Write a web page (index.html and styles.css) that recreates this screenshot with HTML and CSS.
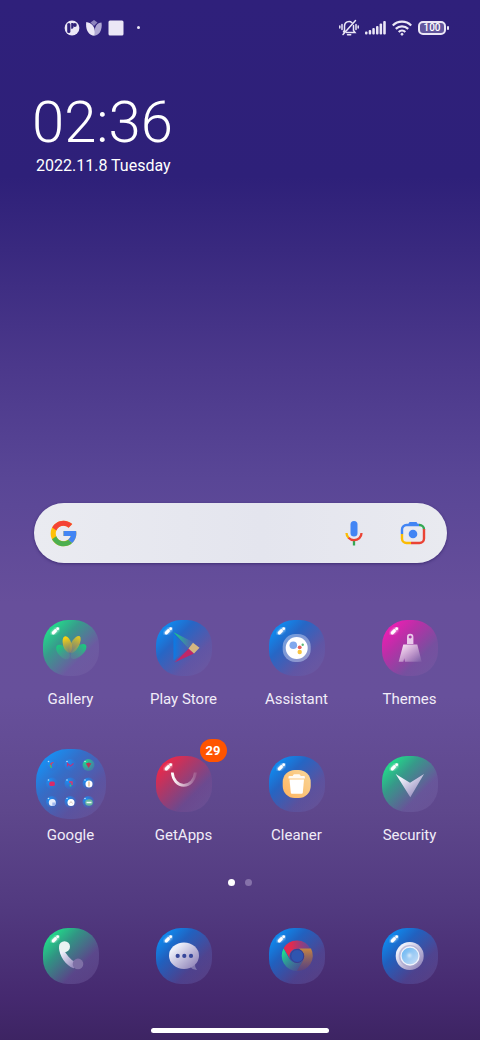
FILE: index.html
```
<!DOCTYPE html>
<html lang="en">
<head>
  <meta charset="UTF-8" />
  <meta name="viewport" content="width=device-width, initial-scale=1" />
  <title>Home screen</title>
  <link rel="stylesheet" href="styles.css">
</head>
<body>
  <!-- shared gradients and the bubble highlight -->
  <svg class="defs" aria-hidden="true">
    <defs>
      <linearGradient id="fade" x1="0" y1="0" x2="1" y2="1">
        <stop offset="0.1" stop-color="#fff" stop-opacity=".85" />
        <stop offset="1" stop-color="#fff" stop-opacity=".05" />
      </linearGradient>
      <linearGradient id="silver" x1="0" y1="0" x2="1" y2="1">
        <stop offset="0.2" stop-color="#eef0fa" />
        <stop offset="1" stop-color="#8375b0" />
      </linearGradient>
      <linearGradient id="yellow" x1="0" y1="0" x2="0" y2="1">
        <stop offset="0.1" stop-color="#fbd30f" />
        <stop offset="1" stop-color="#a98c50" stop-opacity=".4" />
      </linearGradient>
      <linearGradient id="green" x1="0" y1="0" x2="0" y2="1">
        <stop offset="0" stop-color="#14d07c" />
        <stop offset="1" stop-color="#5a8a94" stop-opacity=".4" />
      </linearGradient>
      <linearGradient id="peach" x1="0" y1="1" x2="1" y2="0">
        <stop offset="0" stop-color="#ffb45e" />
        <stop offset="1" stop-color="#f8d79a" />
      </linearGradient>
      <linearGradient id="lens" x1="0" y1="0" x2="1" y2="1">
        <stop offset="0" stop-color="#62b4f3" />
        <stop offset="1" stop-color="#cfdff5" />
      </linearGradient>
      <filter id="soft" x="-50%" y="-50%" width="200%" height="200%">
        <feGaussianBlur stdDeviation="0.8" />
      </filter>
      <symbol id="shine" viewBox="0 0 56 56">
        <path d="M10 13l4.500-4" stroke="#fff" stroke-width="4" stroke-linecap="round" opacity=".6" filter="url(#soft)" />
        <path d="M10.300 12.800l2-2" stroke="#fff" stroke-width="3.200" stroke-linecap="round" />
        <circle cx="14.700" cy="8.700" r="1.400" fill="#fff" />
      </symbol>
    </defs>
  </svg>

  <header class="status">
    <div class="status-side">
      <svg width="16" height="16" viewBox="0 0 16 16">
        <circle cx="8" cy="8" r="7.400" fill="#ebe7f6" />
        <path d="M3.200 4.500a1.600 1.600 0 0 1 3.200 0v7a1.600 1.600 0 0 1-3.200 0z" fill="#2f217a" />
        <path d="M7.200 3h2.200v4.200a1.800 1.800 0 0 1-2.200 1.500z" fill="#2f217a" />
        <circle cx="10.800" cy="5" r="2" fill="#2f217a" />
      </svg>
      <svg width="16" height="16" viewBox="0 0 16 16">
        <path d="M4.500 2.500L8 0l3.500 2.500L8 6z" fill="#8d83bd" />
        <path d="M15.500 2.500C11 3 8 6 8.500 15.800 14 15 16.500 9 15.500 2.500z" fill="#b0a8d4" />
        <path d="M.3 2C6 3 10 7 8.500 15.800 2 15.500-.7 9 .3 2z" fill="#ebe7f6" />
      </svg>
      <svg width="16" height="16" viewBox="0 0 16 16"><rect x=".5" y=".5" width="15" height="15" rx="1.500" fill="#ebe7f6" /></svg>
      <span class="more"></span>
    </div>
    <div class="status-side">
      <svg width="20" height="17" viewBox="0 0 20 17" fill="none" stroke="#ebe7f6" stroke-width="1.500" stroke-linecap="round">
        <path d="M5.500 11.500V7a4.500 4.500 0 0 1 7.500-3.300M14.500 6.500v5l1.500 2H7.500" />
        <path d="M8.500 15.800h3.200M4 15.500L16.500 1.500M5.500 11.500l-1 1.300" />
        <path d="M3 5.500v5M.8 7v2M17 5.500v5M19.200 7v2" />
      </svg>
      <svg width="21" height="15" viewBox="0 0 21 15" fill="#ebe7f6">
        <rect y="11.500" width="2.500" height="3" rx="1" />
        <rect x="3.700" y="10" width="2.500" height="4.500" rx="1" />
        <rect x="7.300" y="8" width="2.500" height="6.500" rx="1" />
        <rect x="11" y="6" width="2.500" height="8.500" rx="1" />
        <rect x="14.600" y="3.500" width="2.500" height="11" rx="1" />
        <rect x="18.200" y="1" width="2.600" height="13.500" rx="1" />
      </svg>
      <svg width="20" height="16" viewBox="0 0 20 16" fill="none" stroke="#ebe7f6" stroke-width="2.200">
        <path d="M.8 5.500a13 13 0 0 1 18.400 0M3.800 8.900a8.800 8.800 0 0 1 12.400 0M6.700 12a4.700 4.700 0 0 1 6.600 0" />
        <circle cx="10" cy="14.200" r="1" fill="#ebe7f6" stroke-width="1" />
      </svg>
      <span class="battery">100</span>
    </div>
  </header>

  <section class="clock">
    <time class="clock-time">02:36</time>
    <div class="clock-date">2022.11.8 Tuesday</div>
  </section>

  <main>
    <form class="search">
      <svg width="27" height="27" viewBox="3 3 42 42">
        <path fill="#FFC107" d="M43.600 20H42V20H24v8h11.300c-1.600 4.700-6.100 8-11.300 8-6.600 0-12-5.400-12-12s5.400-12 12-12c3.100 0 5.800 1.200 8 3l5.600-5.600C34 6.100 29.300 4 24 4 13 4 4 13 4 24s9 20 20 20 20-9 20-20c0-1.300-.1-2.700-.4-4z" />
        <path fill="#F44336" d="M6.300 14.700l6.600 4.800C14.700 15.100 19 12 24 12c3.100 0 5.800 1.200 8 3l5.600-5.600C34 6.100 29.300 4 24 4 16.300 4 9.700 8.300 6.300 14.700z" />
        <path fill="#4CAF50" d="M24 44c5.200 0 9.900-2 13.400-5.200l-6.200-5.200C29.200 35.100 26.700 36 24 36c-5.200 0-9.600-3.300-11.300-7.900l-6.500 5C9.500 39.600 16.200 44 24 44z" />
        <path fill="#4285F4" d="M43.600 20H24v8h11.300c-.8 2.200-2.200 4.200-4.100 5.600l6.200 5.200C37 39.200 44 34 44 24c0-1.300-.1-2.700-.4-4z" />
      </svg>
      <input type="search" aria-label="Search">
      <button type="button" aria-label="Voice search">
        <svg width="18" height="26" viewBox="0 0 18 26" fill="none" stroke-width="2.300">
          <rect x="5.500" y="1" width="7" height="15.500" rx="3.500" fill="#4285f4" />
          <path d="M9 21v4.500" stroke="#34a853" />
          <path d="M1.500 13c0 2 .8 3.600 2.200 5" stroke="#fbbc04" />
          <path d="M3.500 17.800c1.500 1.600 3.400 2.400 5.500 2.400 4.300 0 7.500-3 7.500-7.200" stroke="#ea4335" />
        </svg>
      </button>
      <button type="button" aria-label="Lens">
        <svg width="26" height="24" viewBox="0 0 26 24" fill="none" stroke-width="2.400">
          <path d="M2 13V8.500A4.500 4.500 0 0 1 6.500 4H19" stroke="#4285f4" />
          <path d="M8 3.500L9.500 1h7L18 3.500z" fill="#4285f4" />
          <path d="M19 4h.5A4.500 4.500 0 0 1 24 8.500" stroke="#34a853" />
          <path d="M24 8v9.500a4.500 4.500 0 0 1-4.500 4.500H11" stroke="#ea4335" />
          <path d="M2 13v4.500A4.500 4.500 0 0 0 6.500 22H11" stroke="#fbbc04" />
          <circle cx="13" cy="13" r="4.300" fill="#4285f4" />
        </svg>
      </button>
    </form>

    <nav class="apps">
      <a class="app" href="#">
        <span class="bubble is-green">
          <svg viewBox="0 0 56 56">
            <use href="#shine" />
            <ellipse cx="20" cy="32" rx="4.800" ry="8.800" transform="rotate(-42 20 32)" fill="url(#green)" />
            <ellipse cx="35.500" cy="31.500" rx="4.800" ry="9.800" transform="rotate(48 35.500 31.500)" fill="url(#green)" />
            <ellipse cx="24.300" cy="24.500" rx="4.300" ry="8.500" transform="rotate(-16 24.300 24.500)" fill="url(#yellow)" />
            <ellipse cx="32" cy="24.500" rx="4" ry="9.500" transform="rotate(28 32 24.500)" fill="url(#yellow)" opacity=".8" />
          </svg>
        </span>
        <span class="app-name">Gallery</span>
      </a>
      <a class="app" href="#">
        <span class="bubble is-blue">
          <svg viewBox="0 0 56 56">
            <defs>
              <linearGradient id="playBlue"><stop offset="0" stop-color="#087be6" /><stop offset="1" stop-color="#4e63b5" stop-opacity=".1" /></linearGradient>
              <linearGradient id="playGreen"><stop offset="0" stop-color="#12db80" /><stop offset="1" stop-color="#6c79a8" stop-opacity=".2" /></linearGradient>
            </defs>
            <use href="#shine" />
            <path d="M17.500 14v26.500L32 28z" fill="url(#playBlue)" />
            <path d="M17.500 12.300L38 22.500l-6 5.500z" fill="url(#playGreen)" />
            <path d="M18.500 42.500L33 28.500l5 5z" fill="#c02768" />
            <path d="M37 22.700l6.500 5-5.500 5.800-5.500-5z" fill="#d5b781" />
          </svg>
        </span>
        <span class="app-name">Play Store</span>
      </a>
      <a class="app" href="#">
        <span class="bubble is-blue">
          <svg viewBox="0 0 56 56">
            <use href="#shine" />
            <rect x="13.700" y="14" width="28" height="28" rx="12.500" fill="#bac8ed" opacity=".55" />
            <circle cx="27.700" cy="28" r="11" fill="#fff" />
            <circle cx="24.300" cy="25.300" r="3.800" fill="#80a8ee" />
            <circle cx="30.700" cy="27.300" r="1.900" fill="#e8615a" />
            <circle cx="30.700" cy="32" r="2.200" fill="#f9c440" />
            <circle cx="33.700" cy="24.700" r="1.200" fill="#5db979" />
          </svg>
        </span>
        <span class="app-name">Assistant</span>
      </a>
      <a class="app" href="#">
        <span class="bubble is-pink">
          <svg viewBox="0 0 56 56">
            <use href="#shine" />
            <path fill-rule="evenodd" d="M25 24v-7a3.200 3.200 0 0 1 6.400 0v7zM28.200 15.500a1.500 1.500 0 1 0 .01 0z" fill="#f0d9f2" opacity=".9" />
            <path d="M21.300 24.500h14l4.400 17.200H23l-.8-3.500-.8 3.500h-4.700z" fill="url(#fade)" />
          </svg>
        </span>
        <span class="app-name">Themes</span>
      </a>
      <a class="app" href="#">
        <span class="bubble is-folder">
          <svg viewBox="0 0 70 70">
            <defs>
              <radialGradient id="mini" cx=".3" cy=".3" r=".8"><stop offset="0" stop-color="#1594fa" /><stop offset="1" stop-color="#3b68c6" stop-opacity=".2" /></radialGradient>
              <radialGradient id="miniGreen" cx=".3" cy=".3" r=".8"><stop offset="0" stop-color="#1cdf8c" /><stop offset="1" stop-color="#458f9c" stop-opacity=".5" /></radialGradient>
            </defs>
            <g fill="url(#mini)">
              <circle cx="16" cy="16" r="6" /><circle cx="34.500" cy="16" r="6" /><circle cx="52.500" cy="16" r="6" fill="url(#miniGreen)" />
              <circle cx="16" cy="34.500" r="6" /><circle cx="34.500" cy="34.500" r="6" /><circle cx="52.500" cy="34.500" r="6" />
              <circle cx="16" cy="53" r="6" /><circle cx="34.500" cy="53" r="6" /><circle cx="52.500" cy="53" r="6" />
            </g>
            <path d="M17.500 13.500l-2.500 1v4" stroke="#e33b55" stroke-width="1.300" fill="none" />
            <path d="M14 16l1.500 3" stroke="#22cf81" stroke-width="1.200" />
            <path d="M31.500 17.500v-3l3 2.500 3-2.500" stroke="#b73580" stroke-width="1.300" fill="none" />
            <path d="M49.800 14.500l2.800-1 2.800 1-2.800 4.500z" fill="#bd3457" />
            <rect x="13.300" y="32.500" width="5.500" height="4.500" rx="1.500" fill="#d82a68" />
            <path d="M33 33h3v3" stroke="#df376b" stroke-width="1.400" fill="none" />
            <path d="M34.500 35.500v2" stroke="#23d186" stroke-width="1.600" />
            <circle cx="53" cy="35" r="3.500" fill="#fff" />
            <path d="M53 32.500v5" stroke="#dba75f" />
            <circle cx="16.300" cy="53.500" r="3.500" fill="#e9effc" />
            <path d="M16.300 53.500v3.500a3.500 3.500 0 0 0 3.500-3.500z" fill="#a2baee" />
            <circle cx="35" cy="53.500" r="3.500" fill="#fff" />
            <path d="M33.500 54.500l1.500-2 1.500 2" stroke="#d9c9c0" fill="none" />
            <ellipse cx="53" cy="53.500" rx="3.800" ry="3.200" fill="#68b6a1" />
            <path d="M50.500 53.500h5" stroke="#f0fbf5" stroke-width="1.500" />
            <g fill="#fff" opacity=".7">
              <circle cx="12.500" cy="12.500" r=".8" /><circle cx="31" cy="12.500" r=".8" /><circle cx="49" cy="12.500" r=".8" />
              <circle cx="12.500" cy="31" r=".8" /><circle cx="31" cy="31" r=".8" /><circle cx="49" cy="31" r=".8" />
              <circle cx="12.500" cy="49.500" r=".8" /><circle cx="31" cy="49.500" r=".8" /><circle cx="49" cy="49.500" r=".8" />
            </g>
          </svg>
        </span>
        <span class="app-name">Google</span>
      </a>
      <a class="app" href="#">
        <span class="bubble is-red">
          <svg viewBox="0 0 56 56">
            <defs>
              <linearGradient id="smile"><stop offset="0" stop-color="#fff" /><stop offset="1" stop-color="#fff" stop-opacity=".15" /></linearGradient>
            </defs>
            <use href="#shine" />
            <path d="M16.300 16.500c.5 7.500 5.500 12.800 11.500 12.800S38.800 24 39.300 16.500" fill="none" stroke="url(#smile)" stroke-width="2.800" />
          </svg>
          <span class="badge">29</span>
        </span>
        <span class="app-name">GetApps</span>
      </a>
      <a class="app" href="#">
        <span class="bubble is-blue">
          <svg viewBox="0 0 56 56">
            <use href="#shine" />
            <rect x="13.700" y="14" width="28" height="28" rx="12" fill="url(#peach)" />
            <path d="M19.500 22.500v-1.500q0-1 1-1h3.200q.5-1.800 1.500-1.800h5q1 0 1.500 1.800h3.200q1 0 1 1v1.500z" fill="#fff" opacity=".9" />
            <path d="M20.500 23.500h14.500l-1.200 13.200q-.1 1-1.100 1h-9.800q-1 0-1.100-1z" fill="#fff" />
          </svg>
        </span>
        <span class="app-name">Cleaner</span>
      </a>
      <a class="app" href="#">
        <span class="bubble is-green">
          <svg viewBox="0 0 56 56">
            <use href="#shine" />
            <path d="M13.700 18L28 26.700 42 18 28.300 41.300z" fill="url(#silver)" />
          </svg>
        </span>
        <span class="app-name">Security</span>
      </a>
    </nav>

    <div class="pager"><span class="dot is-current"></span><span class="dot"></span></div>

    <nav class="dock">
      <a class="app" href="#" aria-label="Phone">
        <span class="bubble is-green">
          <svg viewBox="0 0 56 56">
            <use href="#shine" />
            <path d="M16 19c0 9 7 18.500 14.500 21.300l4-3.300-2-2.500C27.500 31.500 23 26.500 20.500 21z" fill="url(#silver)" />
            <circle cx="35" cy="35.900" r="5.300" fill="#7e70a6" />
            <circle cx="21.500" cy="18.700" r="5.500" fill="#eaf3f2" />
          </svg>
        </span>
      </a>
      <a class="app" href="#" aria-label="Messages">
        <span class="bubble is-blue">
          <svg viewBox="0 0 56 56">
            <use href="#shine" />
            <path d="M34 38.500q2 3 7 3.500-2.500-3-2-6.500z" fill="#8177ae" />
            <ellipse cx="28" cy="27.700" rx="15" ry="13.200" fill="url(#silver)" />
            <g fill="#37479b"><circle cx="21.700" cy="27.900" r="2.100" /><circle cx="28.300" cy="27.900" r="2.100" /><circle cx="35" cy="27.900" r="2.100" /></g>
          </svg>
        </span>
      </a>
      <a class="app" href="#" aria-label="Chrome">
        <span class="bubble is-blue">
          <svg viewBox="0 0 56 56">
            <defs>
              <linearGradient id="cRed"><stop offset=".3" stop-color="#e02b50" /><stop offset="1" stop-color="#84428b" stop-opacity=".6" /></linearGradient>
              <linearGradient id="cGreen" x1="0" y1="0" x2="1" y2="1"><stop offset=".1" stop-color="#1be08e" /><stop offset="1" stop-color="#5a4f88" stop-opacity=".2" /></linearGradient>
              <linearGradient id="cYellow" x1="0" y1="0" x2="0" y2="1"><stop offset="0" stop-color="#c9853f" /><stop offset="1" stop-color="#68436e" stop-opacity=".5" /></linearGradient>
            </defs>
            <use href="#shine" />
            <path d="M14.600 20.200A15.300 15.300 0 0 1 41.500 20.700H27.700a7.500 7.500 0 0 0-7 9.500z" fill="url(#cRed)" />
            <path d="M14.500 20.500A15.300 15.300 0 0 0 28 43l6-11q-8 6-13.500-1z" fill="url(#cGreen)" />
            <path d="M30 20.500h12A15.300 15.300 0 0 1 28 43l6-10.500q4-7-4-12z" fill="url(#cYellow)" />
            <circle cx="28.200" cy="28" r="6.500" fill="#2f55b0" stroke="#3c3c8d" />
          </svg>
        </span>
      </a>
      <a class="app" href="#" aria-label="Camera">
        <span class="bubble is-blue">
          <svg viewBox="0 0 56 56">
            <use href="#shine" />
            <circle cx="27.700" cy="28" r="14" fill="url(#silver)" />
            <circle cx="27.700" cy="28" r="11" fill="#a7a4cb" opacity=".6" />
            <circle cx="28" cy="28" r="9" fill="url(#lens)" stroke="#f1f4fc" stroke-width="1.300" />
            <circle cx="27.500" cy="27.500" r="2" fill="#dbecfb" filter="url(#soft)" />
          </svg>
        </span>
      </a>
    </nav>
  </main>

  <footer class="home-bar"></footer>
</body>
</html>
```
FILE: styles.css
```
* { box-sizing: border-box; }
body {
  margin: 0;
  min-height: 100vh;
  display: flex;
  flex-direction: column;
  font-family: Roboto, "Liberation Sans", sans-serif;
  color: #fff;
  background: linear-gradient(to bottom, #2f207b 0%, #2e2079 17%, #39297f 24%, #4b388b 35%, #594696 46%, #674f9b 58%, #67509b 67%, #5e478c 78%, #523a80 87%, #45296f 96%, #3d2463 100%);
}
svg { display: block; }
.defs { position: absolute; width: 0; height: 0; }

.status { display: flex; justify-content: space-between; align-items: center; height: 55px; padding: 0 31px 0 64px; }
.status-side { display: flex; align-items: center; gap: 6px; }
.more { width: 3px; height: 3px; margin-left: 7px; border-radius: 50%; background: #ebe7f6; }
.battery { position: relative; width: 28px; height: 14px; border: 2px solid #ebe7f6; border-radius: 5px; background: #62569d; font-size: 10px; font-weight: 500; line-height: 10px; text-align: center; margin-right: 3px; }
.battery::after { content: ""; position: absolute; right: -5px; top: 3px; width: 2px; height: 4px; border-radius: 1px; background: #ebe7f6; }

.clock { padding: 37px 32px 0; }
.clock-time { display: block; font-size: 58px; line-height: 60px; font-weight: 300; }
.clock-date { padding: 4px 4px 0; font-size: 16px; line-height: 20px; }

main { margin-top: auto; }
.search { display: flex; align-items: center; height: 60px; margin: 0 33px 57px 34px; padding: 0 14px 0 16px; border-radius: 30px; background: linear-gradient(to right, #eaebf1, #e4e5ee 55%, #e9eaf0); box-shadow: 0 1px 3px rgba(30, 15, 80, .5); }
.search input { flex: 1; min-width: 0; height: 40px; border: 0; background: none; font: inherit; color: #333; outline: none; }
.search button { display: grid; place-items: center; width: 40px; height: 40px; padding: 0; border: 0; background: none; }
.search button + button { margin-left: 19px; }

.apps, .dock { display: grid; grid-template-columns: repeat(4, 1fr); padding: 0 14px; }
.apps { row-gap: 47px; }
.app { display: flex; flex-direction: column; align-items: center; color: #f1ecf8; text-decoration: none; }
.app-name { margin-top: 13px; font-size: 15px; line-height: 20px; }
.bubble { position: relative; width: 56px; height: 56px; border-radius: 25px; }
.is-green { background: linear-gradient(135deg, #1ee88a 8%, rgba(40, 180, 135, .75) 35%, rgba(115, 105, 170, .4) 68%, rgba(130, 105, 170, .3)); }
.is-blue { background: linear-gradient(135deg, #0a92f8 8%, rgba(22, 108, 208, .8) 35%, rgba(85, 95, 180, .4) 68%, rgba(130, 105, 170, .3)); }
.is-pink { background: linear-gradient(135deg, #f41bb5 8%, rgba(205, 40, 170, .8) 35%, rgba(140, 80, 165, .4) 68%, rgba(130, 105, 170, .3)); }
.is-red { background: linear-gradient(135deg, #f72545 8%, rgba(200, 50, 90, .8) 35%, rgba(125, 75, 145, .4) 68%, rgba(130, 105, 170, .3)); }
/* the folder is larger than the apps beside it */
.is-folder { width: 70px; height: 70px; margin: -7px; border-radius: 32px; background: linear-gradient(135deg, #1296fb 8%, rgba(40, 120, 215, .8) 35%, rgba(85, 95, 180, .5) 68%, rgba(130, 105, 170, .3)); }
.badge { position: absolute; left: 44px; top: -17px; width: 27px; height: 23px; border-radius: 12px; background: #ff5400; color: #fff; font-size: 13px; font-weight: bold; line-height: 23px; text-align: center; }

.pager { display: flex; justify-content: center; gap: 10px; padding: 34px 0 42px; }
.dot { width: 7px; height: 7px; border-radius: 50%; background: #8672aa; }
.is-current { background: #fff; }

.home-bar { width: 37%; height: 5px; margin: 44px auto 7px; border-radius: 3px; background: #fff; }
```
